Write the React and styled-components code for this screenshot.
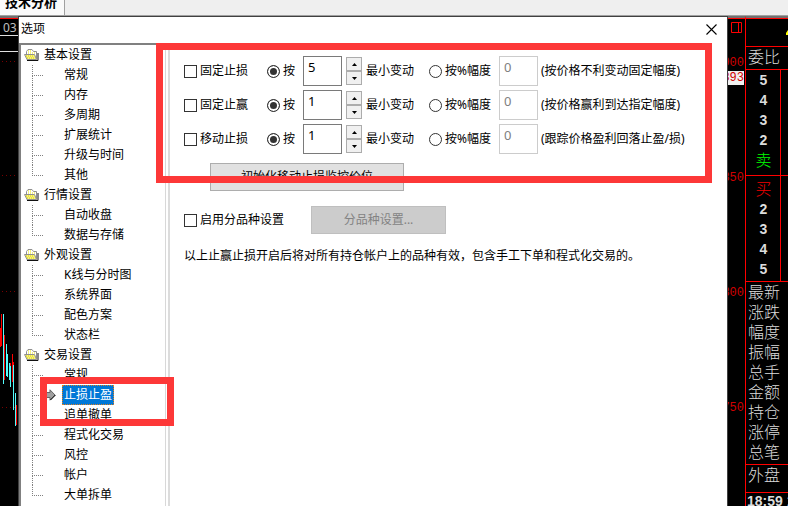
import { useState } from "react";
import styled, { createGlobalStyle } from "styled-components";

const groups = [
    { name: "基本设置", items: ["常规", "内存", "多周期", "扩展统计", "升级与时间", "其他"] },
    { name: "行情设置", items: ["自动收盘", "数据与存储"] },
    { name: "外观设置", items: ["K线与分时图", "系统界面", "配色方案", "状态栏"] },
    { name: "交易设置", items: ["常规", "止损止盈", "追单撤单", "程式化交易", "风控", "帐户", "大单拆单"] },
];

const rules = [
    { id: "loss", name: "固定止损", value: "5", note: "(按价格不利变动固定幅度)" },
    { id: "win", name: "固定止赢", value: "1", note: "(按价格赢利到达指定幅度)" },
    { id: "move", name: "移动止损", value: "1", note: "(跟踪价格盈利回落止盈/损)" },
];

const quoteLabels = ["最新", "涨跌", "幅度", "振幅", "总手", "金额", "持仓", "涨停", "总笔"];

export default function App() {
    const [selected, setSelected] = useState("交易设置/止损止盈");

    return (
        <Page>
            <GlobalStyle />
            <TabBar>
                <Tab type="button">技术分析</Tab>
            </TabBar>
            <Workspace>
                <ChartStrip>
                    <ChartHead>03</ChartHead>
                    <ChartHead />
                    <Candles />
                </ChartStrip>

                <Dialog role="dialog" aria-labelledby="dialog-title">
                    <TitleBar>
                        <Title id="dialog-title">选项</Title>
                        <CloseButton type="button" aria-label="关闭">
                            <svg width="11" height="11" viewBox="0 0 11 11" stroke="#000" strokeWidth="1.1">
                                <path d="M.5 .5l10 10M10.5 .5l-10 10" />
                            </svg>
                        </CloseButton>
                    </TitleBar>
                    <DialogBody>
                        <Tree>
                            {groups.map((group) => (
                                <li key={group.name}>
                                    <GroupName>
                                        <Folder />
                                        {group.name}
                                    </GroupName>
                                    <Branch>
                                        {group.items.map((item, i) => {
                                            const key = group.name + "/" + item;
                                            return (
                                                <Leaf key={key}>
                                                    <Guide $last={i === group.items.length - 1} />
                                                    <Marker>{key === selected && <Arrow />}</Marker>
                                                    <LeafButton
                                                        type="button"
                                                        $selected={key === selected}
                                                        onClick={() => setSelected(key)}
                                                    >
                                                        {item}
                                                    </LeafButton>
                                                </Leaf>
                                            );
                                        })}
                                    </Branch>
                                </li>
                            ))}
                        </Tree>
                        <Form onSubmit={(e) => e.preventDefault()}>
                            {rules.map((rule) => (
                                <Rule key={rule.id} {...rule} />
                            ))}
                            <ResetRow>
                                <PushButton type="button" $width={194}>初始化移动止损监控价位</PushButton>
                            </ResetRow>
                            <ProductRow>
                                <Option>
                                    <Check type="checkbox" />
                                    启用分品种设置
                                </Option>
                                <PushButton type="button" $width={135} disabled>分品种设置...</PushButton>
                            </ProductRow>
                            <Hint>以上止赢止损开启后将对所有持仓帐户上的品种有效，包含手工下单和程式化交易的。</Hint>
                        </Form>
                    </DialogBody>
                    <FormFrame />
                    <TreeFrame />
                </Dialog>

                <Axis>
                    <AxisIcon width="11" height="11" viewBox="0 0 11 11" fill="none" stroke="#f00">
                        <path d="M.5 .5h10v10h-10zM7.5 .5v10" />
                    </AxisIcon>
                    <Tick>900<Price>893</Price></Tick>
                    <Tick>850</Tick>
                    <Tick>800</Tick>
                    <Tick>750</Tick>
                </Axis>

                <Quotes>
                    <QuoteHead>
                        <svg width="2" height="5" viewBox="0 0 2 5"><path d="M0 5V3L2 0v5z" fill="#ff0" /></svg>
                    </QuoteHead>
                    <QuoteBox $height={23}>委比</QuoteBox>
                    <Depth>
                        <b>5</b><b>4</b><b>3</b><b>2</b><Side $color="#00ff00">卖</Side>
                    </Depth>
                    <Depth $buy>
                        <Side $color="#f00000">买</Side><b>2</b><b>3</b><b>4</b><b>5</b>
                    </Depth>
                    <QuoteBox $height={183}>
                        {quoteLabels.map((label) => <div key={label}>{label}</div>)}
                    </QuoteBox>
                    <QuoteBox $height={28}>外盘</QuoteBox>
                    <Times>18:59 1</Times>
                </Quotes>
            </Workspace>
        </Page>
    );
}

function Rule({ id, name, value, note }) {
    const [steps, setSteps] = useState(value);
    const [mode, setMode] = useState("step");

    return (
        <RuleRow>
            <Option>
                <Check type="checkbox" />
                {name}
            </Option>
            <Option>
                <Radio type="radio" name={id} checked={mode === "step"} onChange={() => setMode("step")} />
                按
            </Option>
            <NumberBox aria-label={name + "最小变动"} value={steps} onChange={(e) => setSteps(e.target.value)} />
            <Spinner>
                <SpinButton type="button" aria-label="增加" onClick={() => setSteps(String(Number(steps) + 1))}>
                    <svg width="5" height="3" viewBox="0 0 5 3"><path d="M0 3L2.5 0 5 3z" /></svg>
                </SpinButton>
                <SpinButton type="button" aria-label="减少" onClick={() => setSteps(String(Number(steps) - 1))}>
                    <svg width="5" height="3" viewBox="0 0 5 3"><path d="M0 0h5L2.5 3z" /></svg>
                </SpinButton>
            </Spinner>
            <span>最小变动</span>
            <Option>
                <Radio type="radio" name={id} checked={mode === "percent"} onChange={() => setMode("percent")} />
                按%幅度
            </Option>
            <NumberBox aria-label={name + "幅度"} defaultValue="0" disabled={mode === "step"} />
            <span>{note}</span>
        </RuleRow>
    );
}

function Folder() {
    return (
        <svg width="15" height="12" viewBox="0 0 15 12">
            <path d="M2.5 10V2.5L4 .5h4l1.500 2h3V10z" fill="#fff" stroke="#909090" />
            <path d="M4 2h4M4 4h8" stroke="#e8e000" strokeDasharray="1 1" />
            <path d="M.5 5.500h10l2 5H3z" fill="#f6f27c" stroke="#909090" />
            <path d="M2 7h8M3 9h8" stroke="#dcd000" strokeDasharray="1 1" />
            <path d="M3 11.500h11V4" fill="none" stroke="#111" />
        </svg>
    );
}

function Arrow() {
    return (
        <svg width="10" height="12" viewBox="0 0 10 12">
            <path d="M0 3.500h4V.8L9 6l-5 5.200V8.500H0z" fill="#a0a0a0" stroke="#666" />
            <path d="M4.500 11L9.500 6" stroke="#000" />
        </svg>
    );
}

function Candles() {
    return (
        <svg width="18" height="454" viewBox="0 52 18 454" shapeRendering="crispEdges">
            <path d="M2 61.500h16M2 175.500h16M2 291.500h16M2 407.500h16" stroke="#780000" strokeDasharray="1 3" />
            <path d="M1.500 314v32M4.500 335v45M10.500 363v15M12.500 354v28M16.500 405v20" stroke="#f00" />
            <path d="M0 328h1v19H0zM4 345h1v28H4zM12 362h2v20h-2z" fill="#f00" />
            <path d="M3.500 314v70M6.500 344v32M7.500 354v23M9.500 363v17M10.500 366v21M13.500 365v45M15.500 393v33" stroke="#54fcfc" />
        </svg>
    );
}

const GlobalStyle = createGlobalStyle`
    * {
        box-sizing: border-box;
    }

    body {
        margin: 0;
        background: #000;
        font-family: "Noto Sans", "Noto Sans CJK SC", sans-serif;
        font-size: 12px;
        line-height: 20px;
        color: #000;
    }

    button, input {
        font: inherit;
        margin: 0;
        padding: 0;
    }

    ul {
        list-style: none;
        margin: 0;
        padding: 0;
    }

    svg {
        display: block;
        flex: none;
    }
`;

const Page = styled.div`
    height: 100vh;
    display: flex;
    flex-direction: column;
    overflow: hidden;
`;

const TabBar = styled.div`
    height: 16px;
    flex: none;
    display: flex;
    background: #efefef;
    border-bottom: 1px solid #a0a0a0;
`;

const Tab = styled.button`
    width: 65px;
    display: flex;
    align-items: flex-end;
    padding: 0 0 3px 5px;
    border: 0;
    border-right: 1px solid #a0a0a0;
    background: #fafafa;
    font-size: 13px;
    font-weight: bold;
    white-space: nowrap;
`;

const Workspace = styled.div`
    flex: 1;
    min-height: 0;
    display: grid;
    grid-template-columns: 18px minmax(0, 1fr) 17px 43px;
`;

const ChartStrip = styled.div`
    border-top: 2px solid #707070;
    overflow: hidden;
    color: #c0c0c0;
`;

const ChartHead = styled.div`
    height: 16px;
    padding-left: 3px;
    border-bottom: 1px solid #e0e0e0;
    line-height: 18px;

    &:first-child {
        height: 18px;
        border-top: 1px solid #f00;
    }
`;

const Dialog = styled.div`
    position: relative;
    display: flex;
    flex-direction: column;
    min-height: 0;
    background: #fff;
    border: 1px solid #404040;
    border-bottom: 0;
`;

const TitleBar = styled.div`
    height: 26px;
    flex: none;
    display: flex;
    align-items: center;
    justify-content: space-between;
    padding: 0 10px 2px 2px;
`;

const Title = styled.span`
    line-height: 24px;
`;

const CloseButton = styled.button`
    border: 0;
    background: none;
`;

const DialogBody = styled.div`
    flex: 1;
    min-height: 0;
    display: flex;
    gap: 2px;
`;

const Tree = styled.ul`
    width: 147px;
    flex: none;
    overflow: hidden;
    border: 2px solid #808080;
    border-right: 1px solid #d8d8d8;
    border-bottom: 0;
`;

const GroupName = styled.div`
    height: 20px;
    display: flex;
    align-items: center;
    gap: 5px;
    padding-left: 3px;
`;

const Branch = styled.ul`
    padding-left: 11px;
`;

const Leaf = styled.li`
    height: 20px;
    display: flex;
    align-items: center;
`;

const Guide = styled.span`
    width: 11px;
    align-self: stretch;
    display: flex;
    flex-direction: column;

    &::before,
    &::after {
        content: "";
        flex: 1;
        border-left: 1px dotted #808080;
    }

    &::before {
        border-bottom: 1px dotted #808080;
    }

    &::after {
        border-left-style: ${(props) => (props.$last ? "none" : "dotted")};
    }
`;

const Marker = styled.span`
    width: 19px;
    padding-left: 3px;
`;

const LeafButton = styled.button`
    height: 20px;
    padding: 0 1px;
    border: 1px dotted ${(props) => (props.$selected ? "#e08020" : "transparent")};
    background: ${(props) => (props.$selected ? "#0078d7" : "none")};
    color: ${(props) => (props.$selected ? "#fff" : "#000")};
    line-height: 18px;
`;

const Form = styled.form`
    flex: 1;
    min-width: 0;
    padding: 13px 0 0 14px;
    border-left: 2px solid #dcdcdc;
    white-space: nowrap;
`;

const RuleRow = styled.div`
    display: grid;
    grid-template-columns: 83px 36px 43px 20px 63px 70px 42px auto;
    align-items: center;
    margin-bottom: 4px;
`;

const Option = styled.label`
    display: flex;
    align-items: center;
    gap: 3px;
`;

const Check = styled.input`
    appearance: none;
    width: 13px;
    height: 13px;
    border: 1px solid #333;
    background: #fff;

    &:checked {
        box-shadow: inset 0 0 0 2px #fff;
        background: #333;
    }
`;

const Radio = styled(Check)`
    border-radius: 50%;
`;

const NumberBox = styled.input`
    width: 39px;
    height: 30px;
    padding: 0 4px 8px;
    border: 1px solid #7a7a7a;
    background: #fff;
    font-size: 13px;

    &:disabled {
        border-color: #ccc;
        color: #808080;
    }
`;

const Spinner = styled.div`
    width: 16px;
    height: 28px;
    display: flex;
    flex-direction: column;
`;

const SpinButton = styled.button`
    flex: 1;
    display: flex;
    align-items: center;
    justify-content: center;
    border: 1px solid #acacac;
    background: #f0f0f0;
`;

const ResetRow = styled.div`
    padding: 5px 0 0 26px;
`;

const ProductRow = styled.div`
    display: flex;
    align-items: center;
    gap: 27px;
    margin: 15px 0 12px;
`;

const PushButton = styled.button`
    display: block;
    width: ${(props) => props.$width}px;
    height: 28px;
    border: 1px solid #adadad;
    background: #e1e1e1;

    &:disabled {
        border-color: #bfbfbf;
        background: #ccc;
        color: #838383;
    }
`;

const Hint = styled.p`
    margin: 0;
`;

// highlight frames drawn over the dialog
const Frame = styled.div`
    position: absolute;
    border: 7px solid #fd3838;
    pointer-events: none;
`;

const FormFrame = styled(Frame)`
    top: 26px;
    left: 137px;
    right: 15px;
    height: 140px;
`;

const TreeFrame = styled(Frame)`
    top: 360px;
    left: 21px;
    width: 134px;
    height: 49px;
`;

const Axis = styled.div`
    overflow: hidden;
    border-top: 2px solid #707070;
    color: #d00000;
    font-family: "Liberation Mono", monospace;
    font-size: 12px;
    line-height: 14px;
`;

const AxisIcon = styled.svg`
    width: 100%;
    height: 38px;
    padding: 3px 3px 23px;
    border-top: 1px solid #f00;
`;

const Tick = styled.div`
    height: 115px;
    display: flex;
    flex-direction: column;
    align-items: flex-end;
    gap: 1px;
    padding-right: 1px;
`;

const Price = styled.span`
    background: #f0f0f0;
`;

const Quotes = styled.div`
    overflow: hidden;
    border-top: 2px solid #707070;
    border-left: 1px solid #f00;
    color: #dcdcdc;
    font-size: 16px;
    font-weight: 300;
    white-space: nowrap;
`;

const QuoteBox = styled.div`
    height: ${(props) => props.$height}px;
    padding-left: 2px;
    border-bottom: 1px solid #f00;
`;

const QuoteHead = styled.div`
    height: 29px;
    display: flex;
    align-items: center;
    justify-content: flex-end;
    border: 1px solid #f00;
    border-width: 1px 0;
`;

const Depth = styled.div`
    height: 106px;
    display: flex;
    flex-direction: column;
    align-items: center;
    padding-top: ${(props) => (props.$buy ? 3 : 0)}px;
    padding-right: 7px;
    border-bottom: 1px solid #f00;
    background: linear-gradient(#f00, #f00) 34px 0 / 1px 100% no-repeat;

    b {
        font-family: "Liberation Sans", sans-serif;
        font-size: 14px;
        font-weight: 700;
    }
`;

const Side = styled.span`
    color: ${(props) => props.$color};
`;

const Times = styled.div`
    padding-left: 1px;
    font-family: "Liberation Sans", sans-serif;
    font-size: 14px;
    font-weight: bold;
    line-height: 17px;
`;
